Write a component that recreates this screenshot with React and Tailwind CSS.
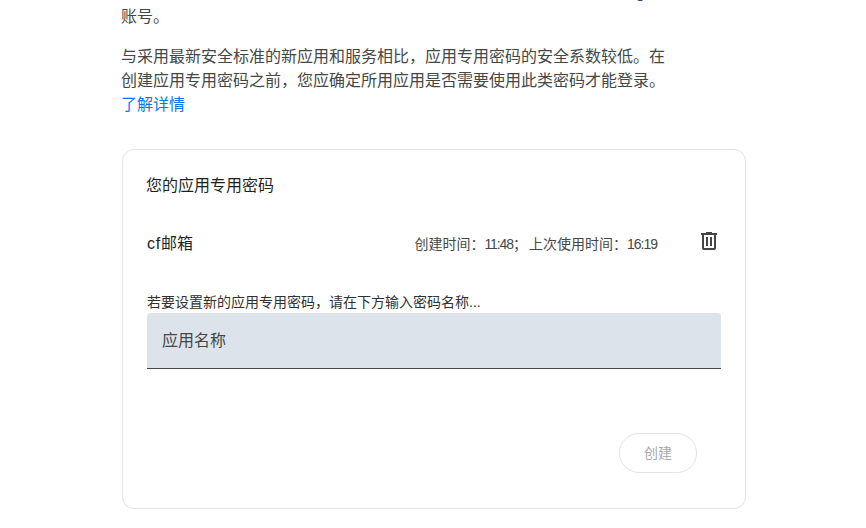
export default function App() {
  return (
    <div className="h-[528px] overflow-hidden bg-white font-['Liberation_Sans','Noto_Sans_CJK_SC',sans-serif] text-[#1f1f1f]">
      <div className="-mt-[19px] ml-[122px] w-[624px]">
        <div className="-ml-px w-[552px] text-base leading-6 text-[#444746]">
          <p>应用专用密码可让您在不支持现代标准的旧版应用和服务上登录您的 Google 账号。</p>
          <p className="mt-4">
            与采用最新安全标准的新应用和服务相比，应用专用密码的安全系数较低。在创建应用专用密码之前，您应确定所用应用是否需要使用此类密码才能登录。
            <a className="text-[#0b75e6]">了解详情</a>
          </p>
        </div>
        <div className="mt-8 h-[360px] rounded-xl border border-[#e3e3e3] pt-6 pl-6 pr-6">
          <h2 className="-ml-px text-base leading-6 text-[#1f1f1f]">您的应用专用密码</h2>
          <div className="mt-[22px] flex h-[48px] items-center">
            <span className="text-base text-[#1f1f1f]"><span className="tracking-[0.8px]">cf</span>邮箱</span>
            <span className="ml-auto text-sm text-[#444746]">
              创建时间：<span className="tracking-[-1.1px]">11:48</span>；<span className="ml-0.5">上次使用时间：</span><span className="tracking-[-1px]">16:19</span>
            </span>
            <svg className="ml-[40px] mb-1.5 h-6 w-6 text-[#444746]" viewBox="0 -960 960 960" fill="currentColor">
              <path d="M280-120q-33 0-56.5-23.5T200-200v-520h-40v-80h200v-40h240v40h200v80h-40v520q0 33-23.5 56.5T680-120H280Zm400-600H280v520h400v-520ZM360-280h80v-360h-80v360Zm160 0h80v-360h-80v360ZM280-720v520-520Z" />
            </svg>
          </div>
          <p className="mt-6 text-sm leading-5 text-[#303030]">若要设置新的应用专用密码，请在下方输入密码名称...</p>
          <div className="mt-px flex h-14 items-center rounded-t border-b border-[#444746] bg-[#dde3ea] pl-[15px] text-base text-[#444746]">应用名称</div>
          <div className="mt-16 flex justify-end pr-6">
            <button className="h-10 w-[78px] rounded-full border border-[#e3e3e3] text-sm text-[#a8a8a8]">创建</button>
          </div>
        </div>
      </div>
    </div>
  );
}
